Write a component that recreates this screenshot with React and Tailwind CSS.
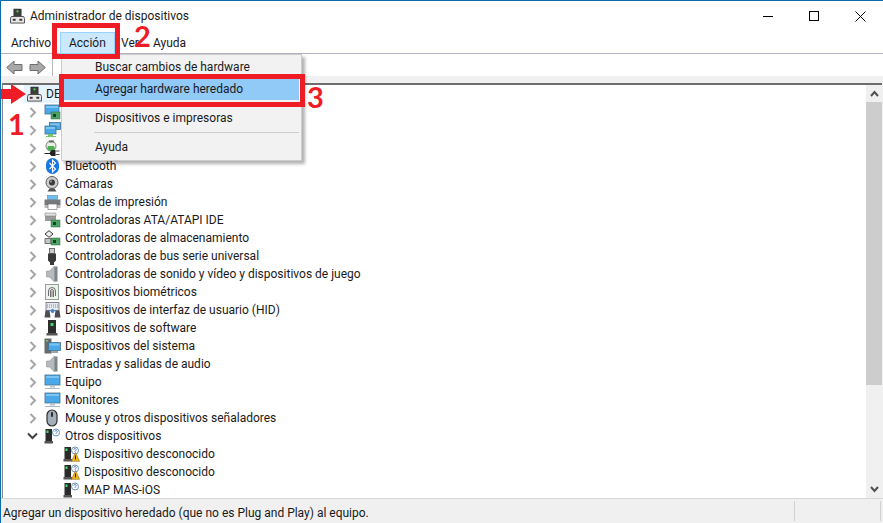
function PcIcon() {
  return (
    <svg width="15" height="17" viewBox="0 0 16 17" className="shrink-0">
      <path d="M4 0.5h8v8H4z" fill="#3a3f3c" stroke="#222" strokeWidth="0.5" />
      <rect x="7" y="2" width="2" height="2" fill="#5fd05a" />
      <path d="M1.5 8.5h13l1 2v5H0.5v-5z" fill="#e6e6e6" stroke="#4a4a4a" />
      <rect x="3" y="11" width="3" height="2" fill="#333" />
      <rect x="10" y="11" width="3" height="2" fill="#333" />
    </svg>
  )
}

function Screen({ x = 1, y = 1, w = 15, h = 10 }) {
  return (
    <>
      <rect x={x} y={y} width={w} height={h} fill="#49a8e8" stroke="#43708e" strokeWidth="0.8" />
      <path d={`M${x + 1} ${y + 1}h${w - 2}v2h-${w - 2}z`} fill="#7cc4f2" />
    </>
  )
}

function Card({ x, y, w = 9, h = 7 }) {
  return (
    <>
      <rect x={x} y={y} width={w} height={h} fill="#4da265" stroke="#2c6b40" strokeWidth="0.5" />
      <rect x={x + 2} y={y + 2} width="3" height="3" fill="#173d26" />
    </>
  )
}

function Device({ type }) {
  if (type === 'pc') return <PcIcon />
  if (type === 'net') {
    return (
      <svg width="17" height="16" viewBox="0 0 17 16" className="shrink-0">
        <Screen w={14} h={9} />
        <Card x={7} y={8} />
      </svg>
    )
  }
  if (type === 'net2') {
    return (
      <svg width="17" height="16" viewBox="0 0 17 16" className="shrink-0">
        <Screen x={5.5} y={0.5} w={11} h={7} />
        <Screen x={1} y={4} w={11} h={8} />
        <path d="M4 12h5v2h3v1H2v-1h2z" fill="#7ac46a" />
      </svg>
    )
  }
  if (type === 'plug') {
    return (
      <svg width="17" height="17" viewBox="0 0 17 17" className="shrink-0">
        <circle cx="7" cy="6" r="5" fill="#e8f0e4" stroke="#4a5a4a" strokeWidth="0.7" />
        <path d="M3 9a5 5 0 0 0 8 0l-1-3H4z" fill="#4cb050" />
        <path d="M5 0.5h5v2H5z" fill="#666" />
        <path d="M0.5 13h5l2-3h4v6h-4l-2-2h-5z" fill="#222" />
        <path d="M11.5 11h4M11.5 14.5h4" stroke="#555" strokeWidth="1.2" />
      </svg>
    )
  }
  if (type === 'bluetooth') {
    return (
      <svg width="13" height="16" viewBox="0 0 13 16" className="shrink-0">
        <rect x="0" y="0" width="13" height="16" rx="6.5" fill="#1677e5" />
        <path d="M3.5 5l6 6-3 3V2l3 3-6 6" stroke="#fff" strokeWidth="1.1" fill="none" />
      </svg>
    )
  }
  if (type === 'cam') {
    return (
      <svg width="14" height="16" viewBox="0 0 14 16" className="shrink-0">
        <circle cx="7" cy="6.5" r="6" fill="#cfcfcf" stroke="#5a5a5a" />
        <circle cx="7" cy="6.5" r="3" fill="#3c3c3c" />
        <circle cx="6" cy="5.5" r="1" fill="#9ab" />
        <path d="M2.5 15.5h9l-2-3h-5z" fill="#555" />
      </svg>
    )
  }
  if (type === 'printer') {
    return (
      <svg width="17" height="15" viewBox="0 0 17 15" className="shrink-0">
        <rect x="3.5" y="0.5" width="10" height="4" fill="#6dbdf0" stroke="#4a7a9a" strokeWidth="0.5" />
        <rect x="0.5" y="4.5" width="16" height="6" fill="#767a7c" />
        <rect x="0.5" y="10.5" width="16" height="2.5" fill="#b9bcbe" />
        <rect x="4" y="9" width="9" height="5.5" fill="#fff" stroke="#666" strokeWidth="0.6" />
      </svg>
    )
  }
  if (type === 'ata') {
    return (
      <svg width="17" height="16" viewBox="0 0 17 16" className="shrink-0">
        <path d="M1 1h11v8H1z" fill="#9a9a9a" />
        <path d="M1 1h11v3H1z" fill="#e0e0e0" stroke="#777" strokeWidth="0.5" />
        <Card x={7} y={8} />
      </svg>
    )
  }
  if (type === 'storage') {
    return (
      <svg width="17" height="16" viewBox="0 0 17 16" className="shrink-0">
        <path d="M5 0.7l4 3.3-4 3.3-4-3.3z" fill="#eee" stroke="#333" />
        <path d="M1 8.5h6v5H1z" fill="#c4c4c4" stroke="#444" strokeWidth="0.7" />
        <Card x={7} y={8} />
      </svg>
    )
  }
  if (type === 'usb') {
    return (
      <svg width="10" height="17" viewBox="0 0 10 17" className="shrink-0">
        <rect x="2.5" y="0.5" width="5" height="5" fill="#ccc" stroke="#555" strokeWidth="0.8" />
        <path d="M1 5.5h8v7l-2 2V17H3v-2.5l-2-2z" fill="#3a3a3a" />
      </svg>
    )
  }
  if (type === 'sound') {
    return (
      <svg width="12" height="16" viewBox="0 0 12 16" className="shrink-0">
        <path d="M0.5 5h3l5-5v16l-5-5h-3z" fill="#b4babd" stroke="#808688" strokeWidth="0.5" />
        <rect x="8.5" y="0.5" width="3" height="15" fill="#7e8589" />
      </svg>
    )
  }
  if (type === 'bio') {
    return (
      <svg width="14" height="16" viewBox="0 0 14 16" className="shrink-0">
        <rect x="0.5" y="0.5" width="13" height="15" fill="#eef3ee" stroke="#8fa393" />
        <path d="M3.5 12V7a3.5 3.5 0 0 1 7 0v5M5.5 13V7a1.5 1.5 0 0 1 3 0v6M7 7v6" stroke="#4a4a4a" fill="none" strokeWidth="0.8" />
      </svg>
    )
  }
  if (type === 'hid') {
    return (
      <svg width="17" height="16" viewBox="0 0 17 16" className="shrink-0">
        <rect x="2" y="0.5" width="13" height="8" fill="#e4e9ef" stroke="#667" strokeWidth="0.8" />
        <path d="M3 3h11M3 5h11" stroke="#7f90a4" strokeDasharray="1 1" />
        <path d="M0.5 15.5l1-7h4l1 7zM10.5 15.5l1-7h4l1 7z" fill="#4c4c54" />
        <circle cx="8.5" cy="9" r="2" fill="#3f86d8" />
      </svg>
    )
  }
  if (type === 'soft') {
    return (
      <svg width="12" height="16" viewBox="0 0 12 16" className="shrink-0">
        <rect x="2" y="0" width="8" height="13" fill="#2d2d2d" />
        <rect x="4.5" y="3" width="3" height="3" fill="#49d06a" />
        <rect x="0.5" y="13" width="11" height="2.5" fill="#555" />
      </svg>
    )
  }
  if (type === 'system') {
    return (
      <svg width="17" height="16" viewBox="0 0 17 16" className="shrink-0">
        <rect x="0.5" y="0.5" width="7" height="15" fill="#6a6a6a" />
        <rect x="2" y="2" width="2" height="1.5" fill="#66d060" />
        <Screen x={4.5} y={4.5} w={12} h={8} />
        <rect x="7" y="13" width="7" height="2" fill="#9aa6ae" />
      </svg>
    )
  }
  if (type === 'monitor') {
    return (
      <svg width="17" height="16" viewBox="0 0 17 16" className="shrink-0">
        <Screen x={1} y={1} w={15} h={10} />
        <rect x="6" y="11.5" width="5" height="2" fill="#b8c4cc" />
        <rect x="1" y="14" width="15" height="1" fill="#aeb8be" />
      </svg>
    )
  }
  if (type === 'mouse') {
    return (
      <svg width="12" height="18" viewBox="0 0 12 18" className="shrink-0">
        <rect x="1" y="1" width="10" height="16" rx="5" fill="#a3aeba" stroke="#2f2f2f" strokeWidth="1.2" />
        <rect x="5" y="3" width="2" height="5" rx="1" fill="#2f2f2f" />
      </svg>
    )
  }
  if (type === 'other' || type === 'warn') {
    return (
      <svg width="17" height="16" viewBox="0 0 17 16" className="shrink-0">
        <rect x="1.5" y="1" width="6.5" height="12" fill="#2a2a2a" />
        <rect x="2.5" y="2.5" width="2" height="2.5" fill="#49e06a" />
        <rect x="0.5" y="13" width="8.5" height="2.5" fill="#555" />
        <circle cx="12" cy="4.5" r="3.5" fill="#fff" stroke="#6a94c4" />
        <path d="M10.8 3.6a1.2 1.2 0 1 1 1.6 1.2l-.4.5v.6" stroke="#3a70b0" fill="none" strokeWidth="0.8" />
        {type === 'warn' && <path d="M12.5 6.5l4 8.8h-8z" fill="#f4b81f" stroke="#8a6a10" strokeWidth="0.6" />}
        {type === 'warn' && <rect x="12" y="9.5" width="1" height="4" fill="#222" />}
      </svg>
    )
  }
  return null
}

const rows = [
  { label: 'DESKTOP', icon: 'pc', top: true },
  { label: '', icon: 'net' },
  { label: '', icon: 'net2' },
  { label: '', icon: 'plug' },
  { label: 'Bluetooth', icon: 'bluetooth' },
  { label: 'Cámaras', icon: 'cam' },
  { label: 'Colas de impresión', icon: 'printer' },
  { label: 'Controladoras ATA/ATAPI IDE', icon: 'ata' },
  { label: 'Controladoras de almacenamiento', icon: 'storage' },
  { label: 'Controladoras de bus serie universal', icon: 'usb' },
  { label: 'Controladoras de sonido y vídeo y dispositivos de juego', icon: 'sound' },
  { label: 'Dispositivos biométricos', icon: 'bio' },
  { label: 'Dispositivos de interfaz de usuario (HID)', icon: 'hid' },
  { label: 'Dispositivos de software', icon: 'soft' },
  { label: 'Dispositivos del sistema', icon: 'system' },
  { label: 'Entradas y salidas de audio', icon: 'sound' },
  { label: 'Equipo', icon: 'monitor' },
  { label: 'Monitores', icon: 'monitor' },
  { label: 'Mouse y otros dispositivos señaladores', icon: 'mouse' },
  { label: 'Otros dispositivos', icon: 'other', open: true },
  { label: 'Dispositivo desconocido', icon: 'warn', child: true },
  { label: 'Dispositivo desconocido', icon: 'warn', child: true },
  { label: 'MAP MAS-iOS', icon: 'other', child: true },
]

function TreeRow({ row }) {
  if (row.top) {
    return (
      <div className="h-[18px] flex items-center pl-[21px]">
        <div className="h-[18px] flex items-center gap-[4px] w-[80px] bg-[#e5f3ff] pl-[3px]">
          <PcIcon />
          <span>DESKTOP</span>
        </div>
      </div>
    )
  }
  if (row.child) {
    return (
      <div className="h-[18px] flex items-center pl-[59px] gap-[3px]">
        <div className="w-[19px] flex justify-center"><Device type={row.icon} /></div>
        <span>{row.label}</span>
      </div>
    )
  }
  return (
    <div className="h-[18px] flex items-center pl-[23px]">
      <div className="w-[13px] flex justify-center">
        {row.open ? (
          <svg width="11" height="8" viewBox="0 0 11 8"><path d="M1 1.5l4.5 4.5L10 1.5" stroke="#404040" strokeWidth="2" fill="none" /></svg>
        ) : (
          <svg width="8" height="11" viewBox="0 0 8 11"><path d="M1.5 1l4.5 4.5L1.5 10" stroke="#a6a6a6" strokeWidth="2" fill="none" /></svg>
        )}
      </div>
      <div className="w-[26px] flex justify-center"><Device type={row.icon} /></div>
      <span>{row.label}</span>
    </div>
  )
}

function Badge({ children, className }) {
  return <div className={`absolute text-[#ee1c25] font-bold text-[29px] leading-none font-['Lato',sans-serif] ${className}`}>{children}</div>
}

export default function App() {
  return (
    <div className="relative w-[883px] h-[523px] overflow-hidden bg-white text-[12px] text-[#1a1a1a] font-['Roboto','Noto_Sans',sans-serif] border-t border-l border-[#0f6cab] flex flex-col">
      {/* Title bar */}
      <div className="h-[30px] flex items-center pl-[9px] shrink-0">
        <PcIcon />
        <span className="ml-[5px]">Administrador de dispositivos</span>
        <div className="ml-auto flex items-center">
          <div className="w-[46px] flex justify-center"><div className="w-[10px] h-[1px] bg-black" /></div>
          <div className="w-[46px] flex justify-center"><div className="w-[10px] h-[10px] border border-black" /></div>
          <div className="w-[46px] flex justify-center">
            <svg width="11" height="11" viewBox="0 0 11 11"><path d="M0.5 0.5l10 10M10.5 0.5l-10 10" stroke="#000" /></svg>
          </div>
        </div>
      </div>

      {/* Menu bar */}
      <div className="h-[23px] flex items-center pl-[10px] pt-[1px] border-b border-[#b3b3c3] shrink-0">
        <span className="w-[49px]">Archivo</span>
        <span className="w-[55px] h-[22px] pl-[8px] flex items-center bg-[#cce8ff] border border-[#99d1ff]">Acción</span>
        <span className="w-[32px] ml-[6px]">Ver</span>
        <span>Ayuda</span>
      </div>

      {/* Toolbar */}
      <div className="h-[22px] flex items-center pl-[5px] pt-[4px] gap-[6px] shrink-0">
        <svg width="17" height="15" viewBox="0 0 17 15"><path d="M0.7 7.5L8 1v3.5h8v6H8V14z" fill="#a8a8a8" stroke="#6e6e6e" /></svg>
        <svg width="17" height="15" viewBox="0 0 17 15"><path d="M16.3 7.5L9 1v3.5H1v6h8V14z" fill="#a8a8a8" stroke="#6e6e6e" /></svg>
        <div className="w-[1px] h-[20px] bg-[#b9b9b9]" />
      </div>

      {/* Tree panel */}
      <div className="flex-1 min-h-0 flex bg-[#f0f0f0] pt-[7px] pr-[1px] pl-[1px]">
        <div className="flex-1 min-w-0 flex border-t-2 border-t-[#6d6d6d] border-l border-l-[#828790] bg-white">
          <div className="flex-1 min-w-0 overflow-hidden">
            {rows.map((row, i) => <TreeRow key={i} row={row} />)}
          </div>
          <div className="w-[16px] bg-[#f0f0f0] flex flex-col items-center shrink-0">
            <div className="h-[17px] flex items-center justify-center">
              <svg width="9" height="7" viewBox="0 0 9 7"><path d="M1 6l3.5-4L8 6" stroke="#505050" strokeWidth="2" fill="none" /></svg>
            </div>
            <div className="w-full h-[283px] bg-[#cdcdcd]" />
            <div className="flex-1" />
            <div className="h-[17px] flex items-center justify-center">
              <svg width="9" height="7" viewBox="0 0 9 7"><path d="M1 1l3.5 4L8 1" stroke="#505050" strokeWidth="2" fill="none" /></svg>
            </div>
          </div>
        </div>
      </div>

      {/* Status bar */}
      <div className="h-[25px] flex items-center pl-[2px] bg-[#f0f0f0] border-t border-[#d7d7d7] shrink-0">
        <span className="flex-1 pt-[3px]">Agregar un dispositivo heredado (que no es Plug and Play) al equipo.</span>
        <div className="w-[1px] h-[20px] bg-[#d0d0d0]" />
        <div className="w-[85px]" />
        <div className="w-[1px] h-[20px] bg-[#d0d0d0] mr-[2px]" />
      </div>

      {/* Accion dropdown */}
      <div className="absolute left-[60px] top-[53px] w-[241px] h-[107px] bg-[#f2f2f2] border border-[#cccccc] shadow-[3px_3px_3px_rgba(0,0,0,0.3)] pt-[1px] px-[2px]">
        <div className="h-[22px] flex items-center pl-[31px]">Buscar cambios de hardware</div>
        <div className="h-[22px] flex items-center pl-[31px] bg-[#91c9f7]">Agregar hardware heredado</div>
        <div className="h-[28px] mt-[4px] flex items-center pl-[31px]">Dispositivos e impresoras</div>
        <div className="h-[1px] bg-[#cfcfcf] ml-[30px]" />
        <div className="h-[24px] mt-[2px] flex items-center pl-[31px]">Ayuda</div>
      </div>

      {/* Red annotations */}
      <div className="absolute left-[51px] top-[22px] w-[68px] h-[36px] border-[5px] border-[#ee1c25]" />
      <div className="absolute left-[58px] top-[73px] w-[246px] h-[33px] border-[5px] border-[#ee1c25]" />
      <Badge className="left-[133px] top-[20px]">2</Badge>
      <Badge className="left-[306px] top-[81px]">3</Badge>
      <Badge className="left-[7px] top-[108px]">1</Badge>
      <svg className="absolute left-[-1px] top-[83px]" width="28" height="20" viewBox="0 0 28 20">
        <path d="M0 5h11V0l15 10-15 10v-5H0z" fill="#ee1c25" />
      </svg>
    </div>
  )
}
